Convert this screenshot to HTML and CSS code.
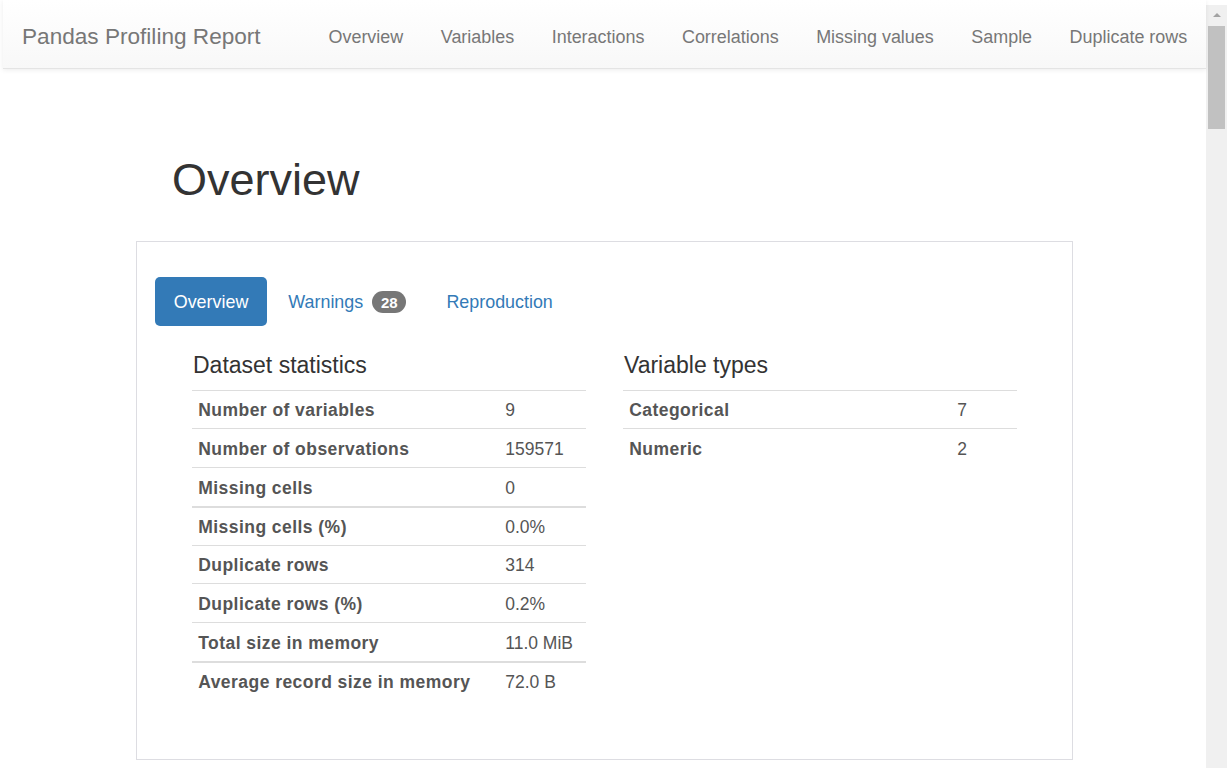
FILE: index.html
```html
<!DOCTYPE html>
<html>
<head>
<meta charset="utf-8">
<title>Pandas Profiling Report</title>
<link rel="stylesheet" href="styles.css">
</head>
<body>
<div class="viewport">
  <nav class="navbar">
    <a class="brand" href="#">Pandas Profiling Report</a>
    <ul class="nav-links">
      <li><a href="#">Overview</a></li>
      <li><a href="#">Variables</a></li>
      <li><a href="#">Interactions</a></li>
      <li><a href="#">Correlations</a></li>
      <li><a href="#">Missing values</a></li>
      <li><a href="#">Sample</a></li>
      <li><a href="#">Duplicate rows</a></li>
    </ul>
  </nav>
  <main class="container">
    <h1 class="page-title">Overview</h1>
    <section class="box">
      <ul class="pills">
        <li><a class="pill active" href="#">Overview</a></li>
        <li><a class="pill" href="#">Warnings <span class="badge">28</span></a></li>
        <li><a class="pill" href="#">Reproduction</a></li>
      </ul>
      <div class="stats">
        <div class="stat-col">
          <h4 class="stat-title">Dataset statistics</h4>
          <table class="stat-table left">
            <tbody>
              <tr><th>Number of variables</th><td>9</td></tr>
              <tr><th>Number of observations</th><td>159571</td></tr>
              <tr><th>Missing cells</th><td>0</td></tr>
              <tr class="thick"><th>Missing cells (%)</th><td>0.0%</td></tr>
              <tr><th>Duplicate rows</th><td>314</td></tr>
              <tr><th>Duplicate rows (%)</th><td>0.2%</td></tr>
              <tr><th>Total size in memory</th><td>11.0 MiB</td></tr>
              <tr class="thick"><th>Average record size in memory</th><td>72.0 B</td></tr>
            </tbody>
          </table>
        </div>
        <div class="stat-col">
          <h4 class="stat-title">Variable types</h4>
          <table class="stat-table right">
            <tbody>
              <tr><th>Categorical</th><td>7</td></tr>
              <tr><th>Numeric</th><td>2</td></tr>
            </tbody>
          </table>
        </div>
      </div>
    </section>
  </main>
</div>
<div class="scrollbar">
  <div class="scroll-arrow"></div>
  <div class="scroll-thumb"></div>
</div>
</body>
</html>
```
FILE: styles.css
```css
* { box-sizing: border-box; }

html, body {
  margin: 0;
  height: 768px;
  overflow: hidden;
  background: #fff;
}

body {
  display: flex;
  padding: 0 5px 0 3px;
  font-family: "Liberation Sans", Arial, sans-serif;
  font-size: 17.5px;
  color: #333;
}

a { text-decoration: none; }
ul { list-style: none; margin: 0; padding: 0; }

.viewport {
  flex: 1;
  min-width: 0;
}

/* navbar */
.navbar {
  display: flex;
  align-items: center;
  height: 69px;
  border-bottom: 1px solid #e4e4e4;
  background: linear-gradient(to bottom, #ffffff 0%, #f8f8f8 100%);
  box-shadow: 0 1px 5px rgba(0, 0, 0, 0.08);
  position: relative;
}

.brand {
  padding-left: 19px;
  font-size: 22.6px;
  color: #777;
  line-height: 25px;
  margin-top: 4px;
}

.nav-links {
  display: flex;
  margin-left: auto;
}

.nav-links a {
  display: block;
  padding: 0 18.75px;
  font-size: 17.95px;
  line-height: 25px;
  color: #777;
  margin-top: 7px;
}

/* main */
.container {
  width: 937px;
  margin: 0 auto;
  padding-top: 86px;
}

.page-title {
  margin: 0 0 36px;
  padding-left: 36px;
  font-size: 45px;
  font-weight: 400;
  line-height: 49.5px;
  color: #333;
}

.box {
  border: 1px solid #dddde2;
  height: 519px;
  padding: 35px 18px 0;
}

.pills {
  display: flex;
  gap: 2.5px;
}

.pill {
  display: flex;
  align-items: center;
  height: 49px;
  padding: 2px 18.75px 0;
  border-radius: 5px;
  color: #337ab7;
  font-size: 17.9px;
  line-height: 25px;
}

.pill.active {
  background: #337ab7;
  color: #fff;
}

.badge {
  display: inline-block;
  margin-left: 9px;
  padding: 3.75px 8.75px;
  border-radius: 12.5px;
  background: #777;
  color: #fff;
  font-size: 15px;
  font-weight: 700;
  line-height: 15px;
}

.stats {
  display: grid;
  grid-template-columns: 394px 394px;
  column-gap: 37px;
  padding-left: 37px;
}

.stat-title {
  margin: 27px 0 12px;
  font-size: 23px;
  font-weight: 400;
  line-height: 25px;
  color: #333;
  padding-left: 1px;
}

.stat-table {
  width: 394px;
  border-collapse: collapse;
  table-layout: fixed;
}

.stat-table.left th { width: 307px; }
.stat-table.right th { width: 328px; }

.stat-table th,
.stat-table td {
  border-top: 1px solid #ddd;
  padding: 7.875px 6.25px 4.875px;
  line-height: 25px;
  font-size: 17.5px;
  color: #555;
  text-align: left;
  vertical-align: top;
  white-space: nowrap;
}

.stat-table tr.thick th,
.stat-table tr.thick td {
  border-top: 2px solid #ddd;
  padding-top: 6.9px;
}

.stat-table th {
  font-weight: 700;
  letter-spacing: 0.45px;
}
.stat-table td { font-weight: 400; }

/* fake window scrollbar */
.scrollbar {
  width: 21px;
  margin-top: 5px;
  background: #f0f0f0;
  display: flex;
  flex-direction: column;
  align-items: center;
}

.scroll-arrow {
  margin-top: 8px;
  width: 0;
  height: 0;
  border-left: 4px solid transparent;
  border-right: 4px solid transparent;
  border-bottom: 4px solid #a3a3a3;
}

.scroll-thumb {
  margin-top: 9px;
  width: 17px;
  height: 103px;
  background: #c1c1c1;
}
```
